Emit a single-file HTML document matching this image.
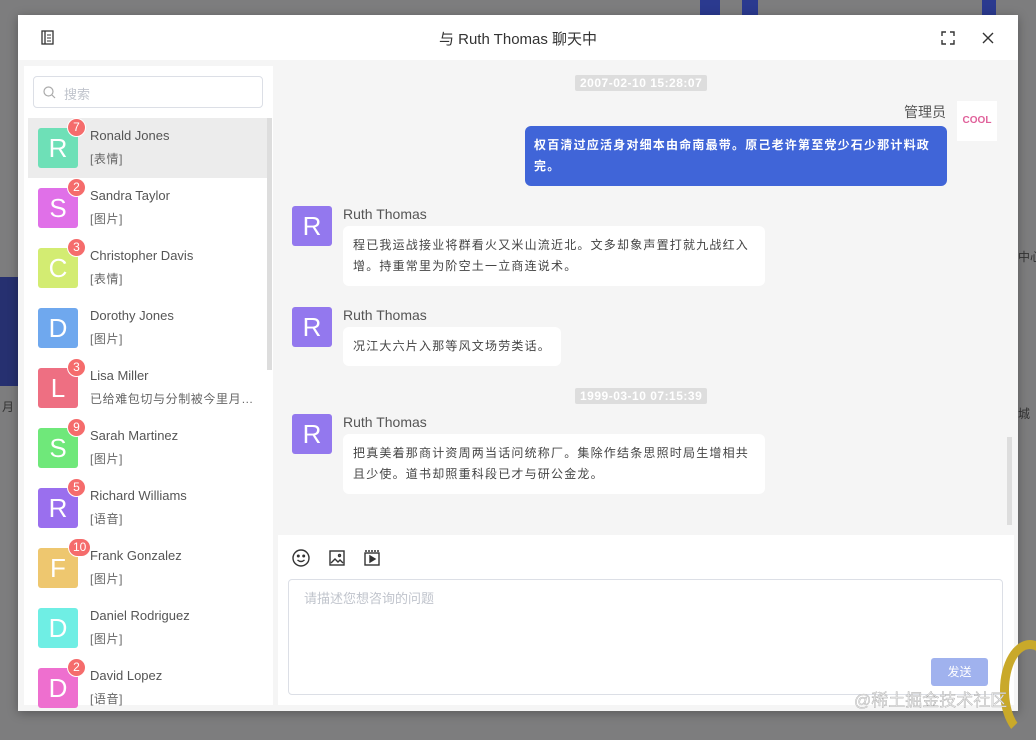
<!DOCTYPE html>
<html><head><meta charset="utf-8"><style>
*{box-sizing:border-box;margin:0;padding:0}
body{width:1036px;height:729px;overflow:hidden;background:#7d7d7e;font-family:"Liberation Sans","Noto Sans CJK SC",sans-serif;position:relative}
.abs{position:absolute}
.modal{left:18px;top:15px;width:1000px;height:696px;background:#f5f5f5;box-shadow:0 2px 10px rgba(0,0,0,.3)}
.hdr{left:0;top:0;width:1000px;height:45px;background:#fff}
.title{left:0;width:1000px;top:13px;text-align:center;font-size:15px;color:#333}
.left{left:6px;top:51px;width:249px;height:639px;background:#fff;overflow:hidden}
.search{left:9px;top:10px;width:230px;height:32px;border:1px solid #dcdfe6;border-radius:4px;font-size:13px;color:#c0c4cc;padding:7px 0 0 30px}
.item{left:4px;width:239px;height:60px}
.av{left:10px;top:10px;width:40px;height:40px;border-radius:3px;color:#fff;font-size:26px;text-align:center;line-height:40px;font-weight:300}
.badge{top:0;height:19px;min-width:19px;border-radius:10px;background:#f56c6c;color:#fff;font-size:12px;text-align:center;line-height:17px;border:1px solid #fff;padding:0 4px}
.nm{left:62px;top:10px;font-size:13px;color:#555}
.ms{left:62px;top:32px;font-size:12px;color:#666;white-space:nowrap;letter-spacing:.6px}
.ts{background:#ddd;color:#fff;font-size:12px;font-weight:bold;padding:1px 5px;border-radius:2px;letter-spacing:.5px}
.ra{left:274px;width:40px;height:40px;border-radius:3px;background:#9378ee;color:#fff;font-size:26px;text-align:center;line-height:40px;font-weight:300}
.rn{left:325px;font-size:14px;color:#555}
.bub{left:325px;background:#fff;border-radius:6px;font-size:12px;color:#444;line-height:21px;padding:9px 10px;letter-spacing:1.2px}
</style></head><body>
<div class="abs" style="left:700px;top:0;width:20px;height:15px;background:#2b3a8f"></div>
<div class="abs" style="left:742px;top:0;width:16px;height:15px;background:#2b3a8f"></div>
<div class="abs" style="left:982px;top:0;width:14px;height:15px;background:#2b3a8f"></div>
<div class="abs" style="left:0;top:277px;width:18px;height:109px;background:#263070"></div>
<div class="abs" style="left:2px;top:398px;font-size:12px;color:#333">月</div>
<div class="abs" style="left:1018px;top:248px;font-size:12px;color:#333;white-space:nowrap">中心</div>
<div class="abs" style="left:1018px;top:405px;font-size:12px;color:#333">城</div>
<div class="abs modal">
 <div class="abs hdr">
  <svg class="abs" style="left:23px;top:15px" width="13" height="15" viewBox="0 0 13 15"><rect x="1" y="1" width="11" height="13" fill="none" stroke="#333" stroke-width="1.3"/><line x1="4" y1="1" x2="4" y2="14" stroke="#333" stroke-width="1.3"/><line x1="6" y1="5" x2="10" y2="5" stroke="#333"/><line x1="6" y1="8" x2="10" y2="8" stroke="#333"/><line x1="6" y1="11" x2="10" y2="11" stroke="#333"/></svg>
  <div class="abs title">与 Ruth Thomas 聊天中</div>
  <svg class="abs" style="left:923px;top:16px" width="14" height="14" viewBox="0 0 14 14" fill="none" stroke="#333" stroke-width="1.4"><path d="M1 5V1h4M9 1h4v4M13 9v4H9M5 13H1V9"/></svg>
  <svg class="abs" style="left:964px;top:17px" width="12" height="12" viewBox="0 0 12 12" stroke="#333" stroke-width="1.4"><path d="M1 1l10 10M11 1L1 11"/></svg>
 </div>
 <div class="abs left">
  <div class="abs search">搜索</div>
  <svg class="abs" style="left:19px;top:20px" width="13" height="13" viewBox="0 0 13 13" fill="none" stroke="#aaa" stroke-width="1.2"><circle cx="5.5" cy="5.5" r="4.5"/><path d="M9 9l3 3"/></svg>
  <div class="abs" style="left:4px;top:52px;width:239px;height:60px;background:#ececec"></div>
  <div class="abs" style="left:243px;top:52px;width:5px;height:252px;background:#ddd"></div>
 </div>
 <div id="list"></div>
 <div class="abs ts" style="left:557px;top:60px">2007-02-10 15:28:07</div>
 <div class="abs" style="left:886px;top:87px;font-size:14px;color:#555">管理员</div>
 <div class="abs" style="left:939px;top:86px;width:40px;height:40px;background:#fff;font-size:10px;font-weight:bold;color:#e0609a;text-align:center;line-height:40px">COOL</div>
 <div class="abs" style="left:507px;top:111px;width:422px;height:60px;background:#4065d8;border-radius:6px;color:#fff;font-size:12px;font-weight:bold;line-height:21px;padding:9px 9px;letter-spacing:1.2px">权百清过应活身对细本由命南最带。原己老许第至党少石少那计料政完。</div>
 <div class="abs ra" style="top:191px">R</div>
 <div class="abs rn" style="top:191px">Ruth Thomas</div>
 <div class="abs bub" style="top:211px;width:422px">程已我运战接业将群看火又米山流近北。文多却象声置打就九战红入增。持重常里为阶空土一立商连说术。</div>
 <div class="abs ra" style="top:292px">R</div>
 <div class="abs rn" style="top:292px">Ruth Thomas</div>
 <div class="abs bub" style="top:312px">况江大六片入那等风文场劳类话。</div>
 <div class="abs ts" style="left:557px;top:373px">1999-03-10 07:15:39</div>
 <div class="abs ra" style="top:399px">R</div>
 <div class="abs rn" style="top:399px">Ruth Thomas</div>
 <div class="abs bub" style="top:419px;width:422px">把真美着那商计资周两当话问统称厂。集除作结条思照时局生增相共且少使。道书却照重科段已才与研公金龙。</div>
 <div class="abs" style="left:989px;top:422px;width:5px;height:88px;background:#ddd"></div>
 <div class="abs" style="left:260px;top:520px;width:736px;height:170px;background:#fff">
  <svg class="abs" style="left:14px;top:14px" width="18" height="18" viewBox="0 0 18 18" fill="none" stroke="#333" stroke-width="1.4"><circle cx="9" cy="9" r="8"/><circle cx="6.3" cy="7" r=".8" fill="#333"/><circle cx="11.7" cy="7" r=".8" fill="#333"/><path d="M5.5 11q3.5 3 7 0"/></svg>
  <svg class="abs" style="left:51px;top:15px" width="16" height="16" viewBox="0 0 16 16" fill="none" stroke="#333" stroke-width="1.4"><rect x="1" y="1" width="14" height="14"/><path d="M2 13l4-4 3 3 2-2 3 3"/><circle cx="10.5" cy="5.5" r="1"/></svg>
  <svg class="abs" style="left:86px;top:14px" width="16" height="17" viewBox="0 0 16 17" fill="none" stroke="#333" stroke-width="1.4"><rect x="1" y="4" width="14" height="12"/><path d="M1 2h14" stroke-dasharray="2 1"/><path d="M6 7v6l5-3z" fill="#333"/></svg>
  <div class="abs" style="left:10px;top:44px;width:715px;height:116px;border:1px solid #dcdfe6;border-radius:4px;font-size:13px;color:#c0c4cc;padding:8px 15px">请描述您想咨询的问题</div>
  <div class="abs" style="left:653px;top:123px;width:57px;height:28px;background:#a0b2ee;border-radius:3px;color:#fff;font-size:12px;text-align:center;line-height:28px">发送</div>
 </div>
</div>
<div class="abs" style="left:1000px;top:640px;width:60px;height:100px;border:9px solid #c9a92a;border-radius:50%;border-right-color:transparent;border-bottom-color:transparent"></div>
<div class="abs" style="left:854px;top:686px;font-size:17px;color:#e8e8e8;-webkit-text-stroke:.3px #999">@稀土掘金技术社区</div>
<script>
var d=[["R","#6ee0b7","Ronald Jones","[表情]","7"],["S","#e070e8","Sandra Taylor","[图片]","2"],["C","#d3ec72","Christopher Davis","[表情]","3"],["D","#6fa8ee","Dorothy Jones","[图片]",""],["L","#ee6f82","Lisa Miller","已给难包切与分制被今里月…","3"],["S","#6fe87a","Sarah Martinez","[图片]","9"],["R","#9a6fee","Richard Williams","[语音]","5"],["F","#eec76f","Frank Gonzalez","[图片]","10"],["D","#6feee4","Daniel Rodriguez","[图片]",""],["D","#ee6fcf","David Lopez","[语音]","2"]];
var h="";d.forEach(function(x,i){var t=103+i*60;h+='<div class="abs item" style="left:10px;top:'+t+'px"><div class="abs av" style="background:'+x[1]+'">'+x[0]+'</div>'+(x[4]?'<div class="abs badge" style="left:'+(x[4].length>1?40:39)+'px">'+x[4]+'</div>':'')+'<div class="abs nm">'+x[2]+'</div><div class="abs ms">'+x[3]+'</div></div>';});
document.getElementById("list").outerHTML=h;
</script>
</body></html>
